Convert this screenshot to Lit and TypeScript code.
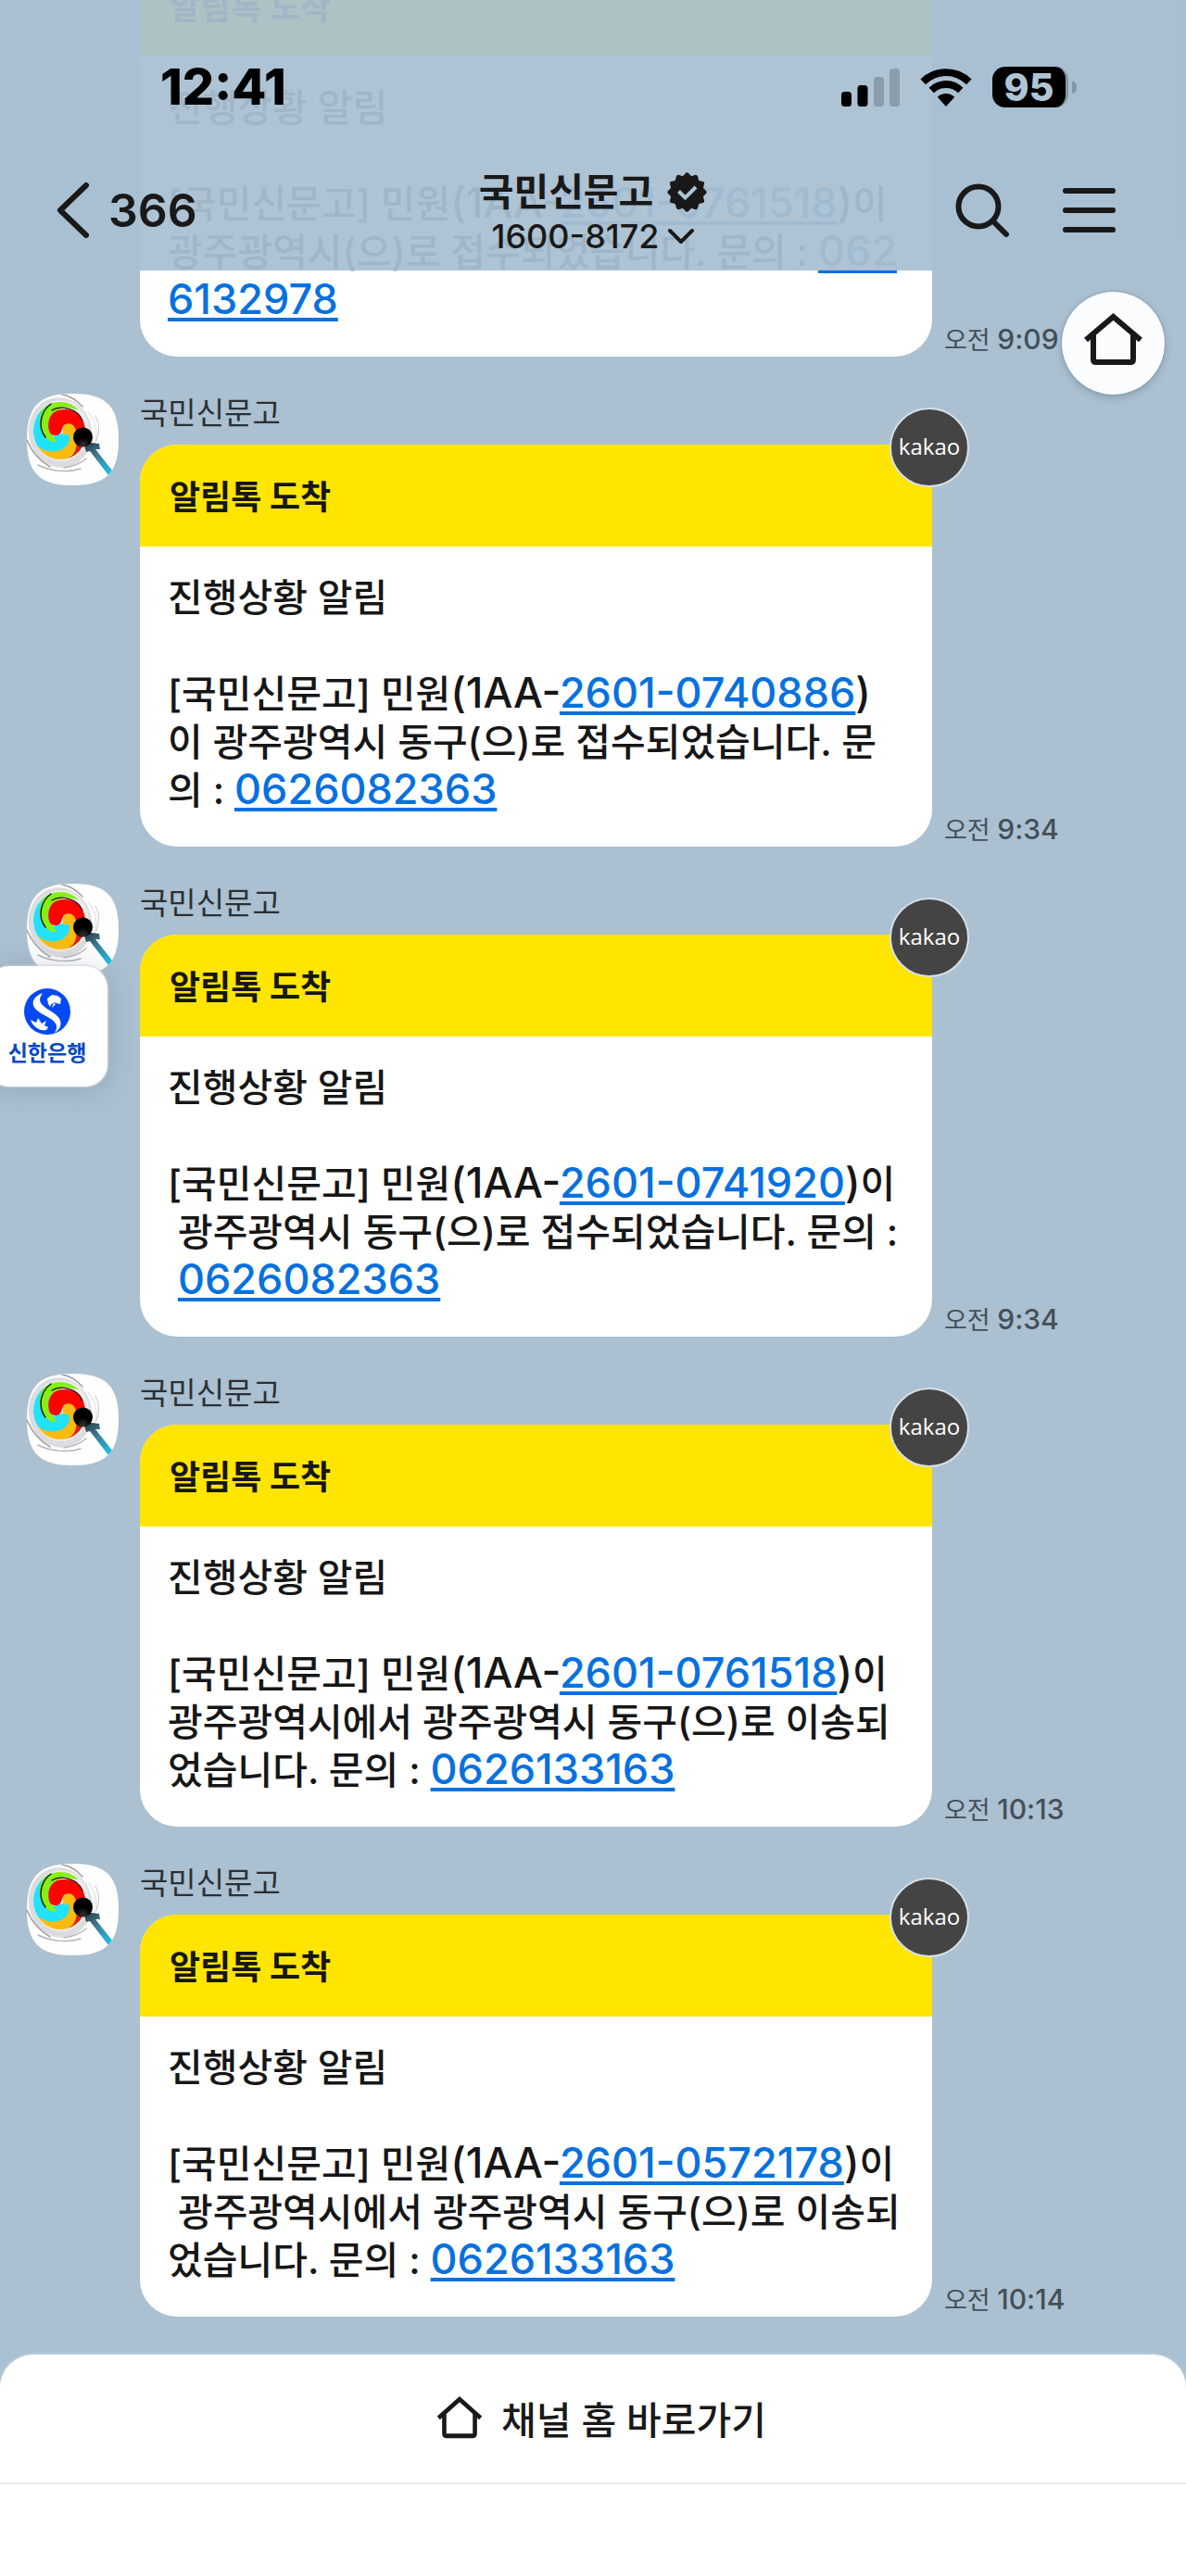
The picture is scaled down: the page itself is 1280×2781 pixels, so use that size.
import { LitElement, html, css, svg, nothing } from "lit";
import { customElement, property } from "lit/decorators.js";

type Part = { kind: "text" | "latin" | "link"; value: string };
interface Notice {
  parts: Part[];
  time: string;
  badge: boolean;
}

const t = (value: string): Part => ({ kind: "text", value });
const n = (value: string): Part => ({ kind: "latin", value });
const a = (value: string): Part => ({ kind: "link", value });

const NOTICES: Notice[] = [
  {
    parts: [t("[국민신문고] 민원"), n("(1AA-"), a("2601-0761518"), n(")"), t("이\n광주광역시(으)로 접수되었습니다. 문의 : "), a("062\n6132978")],
    time: "9:09",
    badge: false,
  },
  {
    parts: [t("[국민신문고] 민원"), n("(1AA-"), a("2601-0740886"), n(")"), t("\n이 광주광역시 동구(으)로 접수되었습니다. 문\n의 : "), a("0626082363")],
    time: "9:34",
    badge: true,
  },
  {
    parts: [t("[국민신문고] 민원"), n("(1AA-"), a("2601-0741920"), n(")"), t("이\n 광주광역시 동구(으)로 접수되었습니다. 문의 :\n "), a("0626082363")],
    time: "9:34",
    badge: true,
  },
  {
    parts: [t("[국민신문고] 민원"), n("(1AA-"), a("2601-0761518"), n(")"), t("이\n광주광역시에서 광주광역시 동구(으)로 이송되\n었습니다. 문의 : "), a("0626133163")],
    time: "10:13",
    badge: true,
  },
  {
    parts: [t("[국민신문고] 민원"), n("(1AA-"), a("2601-0572178"), n(")"), t("이\n 광주광역시에서 광주광역시 동구(으)로 이송되\n었습니다. 문의 : "), a("0626133163")],
    time: "10:14",
    badge: true,
  },
];

const houseShape = svg`
  <path d="M3 29 L32.500 4 L62 29" fill="none" stroke="#191919" stroke-width="6" />
  <path d="M11 23 V50 Q11 53 14 53 H51 Q54 53 54 50 V23" fill="none" stroke="#191919" stroke-width="6" />
`;

@customElement("sender-avatar")
export class SenderAvatar extends LitElement {
  static styles = css`
    :host { display: block; width: 99px; height: 99px; }
    svg { display: block; width: 100%; height: 100%; }
  `;
  render() {
    return html`
      <svg viewBox="0 0 99 99" aria-hidden="true">
        <defs>
          <clipPath id="tile"><path d="M49.500 0 C84 0 99 12 99 49.500 C99 87 84 99 49.500 99 C15 99 0 87 0 49.500 C0 12 15 0 49.500 0 Z" /></clipPath>
          <clipPath id="disc"><ellipse cx="36" cy="40" rx="29" ry="31" /></clipPath>
          <linearGradient id="stick" gradientUnits="userSpaceOnUse" x1="64" y1="54" x2="90" y2="86">
            <stop offset="0" stop-color="#29414b" /><stop offset=".45" stop-color="#3f8098" /><stop offset="1" stop-color="#18c0ea" />
          </linearGradient>
          <radialGradient id="ball" cx=".5" cy=".9" r=".8">
            <stop offset="0" stop-color="#333" /><stop offset=".5" stop-color="#000" />
          </radialGradient>
        </defs>
        <g clip-path="url(#tile)">
          <rect width="99" height="99" fill="#fefefe" />
          <ellipse cx="36" cy="42" rx="34" ry="38" fill="#dcdce0" transform="rotate(-12 36 42)" />
          <ellipse cx="37" cy="40" rx="30" ry="33" fill="#ececee" />
          <g clip-path="url(#disc)">
            <path d="M26 8 C12 14 6 26 7 42 L8 54 C14 62 22 64 30 63 C42 62 49 54 46 44 L38 43 L28 46 L20 30 Z" fill="#22e2fb" />
            <path d="M22 12 C32 5 50 7 58 18 L40 14 L26 24 L24 38 L32 52 C24 54 16 44 14 34 C13 24 16 16 22 12 Z" fill="#86ef16" />
            <path d="M24 40 C21 26 28 17 40 17 C54 17 62 27 63 38 L54 42 C51 34 45 31 40 34 C37 38 38 44 32 45 C27 45 25 43 24 40 Z" fill="#fb0400" />
            <path d="M39 36 C42 31 49 31 52 37 C54 44 55 50 60 56 C56 68 46 73 34 72 C22 70 12 62 9 54 C16 61 24 64 33 62 C42 60 47 53 46 46 C45 43 42 43 39 44 Z" fill="#fbbb10" />
            <path d="M44 70 C52 66 53 60 54 53 L66 53 C64 64 54 71 44 73 Z" fill="#dd1d10" />
          </g>
          <g fill="none" stroke-linecap="round">
            <path d="M26 11 C15 19 11 35 20 47" stroke="#0d2208" stroke-width="1.500" />
            <path d="M27 18 C36 12 55 16 60 29" stroke="#2b0a05" stroke-width="1.200" />
            <path d="M38 1 Q50 3 60 14" stroke="#9b9ba0" stroke-width="1.500" />
            <path d="M66 20 C76 31 77 46 72 58" stroke="#dadade" stroke-width="1" />
            <path d="M74 24 Q81 36 75 51" stroke="#c9c9cd" stroke-width="1" />
            <path d="M0 50 Q8 69 25 79" stroke="#a0a0a5" stroke-width="1.500" />
            <path d="M12 77 C24 83 42 86 58 81" stroke="#b4b4b8" stroke-width="1.500" />
            <path d="M40 80 Q55 78 64 70" stroke="#b5b5ba" stroke-width="1.500" />
          </g>
          <path d="M61 52 L70 53 L78 54 L79 60 L74 60 L93 84 L88 88 L68 62 L64 63 Z" fill="url(#stick)" />
          <circle cx="60.500" cy="47" r="10.500" fill="url(#ball)" />
        </g>
      </svg>
    `;
  }
}

@customElement("notice-message")
export class NoticeMessage extends LitElement {
  @property({ attribute: false }) notice!: Notice;

  static styles = css`
    :host {
      display: flex;
      align-items: flex-start;
      gap: 23px;
    }
    .column { flex: 0 1 855px; min-width: 0; }
    .name {
      margin: 0 0 13px;
      font-size: 33px;
      line-height: 42px;
      color: #2b3034;
    }
    .card {
      position: relative;
      border-radius: 40px;
      background: #fff;
      color: #161616;
    }
    .head {
      margin: 0;
      padding: 4px 32px 0;
      border-radius: 40px 40px 0 0;
      background: #ffe500;
      font-size: 36px;
      font-weight: 700;
      line-height: 106px;
    }
    .body {
      margin: 0;
      padding: 29px 30px 35px;
      font-size: 41px;
      font-weight: 500;
      line-height: 52px;
      white-space: pre;
    }
    .latin, .link { font-size: 45px; line-height: 44px; }
    .link {
      color: #0671df;
      text-decoration: underline;
      text-decoration-thickness: 4px;
      text-underline-offset: 4px;
      text-decoration-skip-ink: none;
    }
    .badge {
      position: absolute;
      top: -40px;
      right: -40px;
      box-sizing: border-box;
      width: 86px;
      height: 86px;
      border: 2px solid #d5e0e8;
      border-radius: 50%;
      background: #444;
      color: #fff;
      font: 24px/80px "Open Sans", "Noto Sans", sans-serif;
      text-align: center;
    }
    .time {
      align-self: flex-end;
      margin-left: -10px;
      font-size: 27px;
      line-height: 34px;
      color: #444f58;
      white-space: nowrap;
    }
    .clock { font-size: 30px; line-height: 30px; font-weight: 500; }
  `;

  private part(p: Part) {
    if (p.kind === "link") {
      return html`<a class="link" href="tel:${p.value.replace(/\s/g, "")}">${p.value}</a>`;
    }
    if (p.kind === "latin") return html`<span class="latin">${p.value}</span>`;
    return p.value;
  }

  render() {
    const { parts, time, badge } = this.notice;
    return html`
      <sender-avatar></sender-avatar>
      <div class="column">
        <p class="name">국민신문고</p>
        <div class="card">
          <h2 class="head">알림톡 도착</h2>
          <p class="body">${"진행상황 알림\n\n"}${parts.map((p) => this.part(p))}</p>
          ${badge ? html`<span class="badge">kakao</span>` : nothing}
        </div>
      </div>
      <time class="time">오전 <span class="clock">${time}</span></time>
    `;
  }
}

@customElement("app-root")
export class AppRoot extends LitElement {
  static styles = css`
    :host {
      position: relative;
      display: flex;
      flex-direction: column;
      min-height: 100vh;
      overflow: hidden;
      background: #abc0d1;
      color: #191919;
      font-family: Inter, "Noto Sans CJK KR", sans-serif;
    }
    svg { display: block; flex: none; }
    button {
      margin: 0;
      padding: 0;
      border: 0;
      background: none;
      color: inherit;
      font: inherit;
      cursor: pointer;
    }
    .top {
      position: absolute;
      inset: 0 0 auto;
      z-index: 2;
      padding-top: 47px;
      background: rgba(169, 191, 209, 0.94);
    }
    .status {
      display: flex;
      align-items: center;
      justify-content: space-between;
      height: 94px;
      padding: 0 118px 0 173px;
      color: #000;
    }
    .clock { font-size: 54px; font-weight: 800; line-height: 60px; }
    .radios { display: flex; align-items: center; gap: 22px; }
    .power { display: flex; align-items: center; gap: 4px; }
    .battery {
      width: 79px;
      height: 44px;
      border-right: 3px solid #8496a2;
      border-radius: 14px;
      background: #000;
      color: #afc5d5;
      font-size: 41px;
      font-weight: 800;
      line-height: 44px;
      text-align: center;
    }
    .nub { width: 5px; height: 13px; border-radius: 0 6px 6px 0; background: #8496a2; }
    .nav {
      display: grid;
      grid-template-columns: 1fr auto 1fr;
      align-items: center;
      height: 130px;
      padding: 21px 76px 0 61px;
    }
    .back {
      display: flex;
      align-items: center;
      justify-self: start;
      gap: 19px;
      font-size: 50px;
      font-weight: 600;
      line-height: 60px;
    }
    .heading { margin-right: -15px; }
    .title {
      display: flex;
      align-items: center;
      justify-content: center;
      gap: 15px;
      margin: 0;
      font-size: 41px;
      font-weight: 700;
      line-height: 56px;
    }
    .phone {
      display: flex;
      align-items: center;
      justify-content: center;
      gap: 8px;
      width: 100%;
      font-size: 36px;
      font-weight: 500;
      line-height: 40px;
    }
    .tools { display: flex; align-items: center; justify-self: end; gap: 56px; }
    .chat {
      display: flex;
      flex: 1;
      flex-direction: column;
      gap: 40px;
      margin-top: -104px;
      padding: 0 29px 41px;
    }
    .home {
      position: absolute;
      top: 315px;
      right: 23px;
      z-index: 3;
      display: grid;
      place-items: center;
      width: 111px;
      height: 111px;
      padding-bottom: 8px;
      border-radius: 50%;
      background: #fbfcfd;
      box-shadow: 0 3px 8px rgba(60, 85, 105, 0.3), 0 0 2px rgba(60, 85, 105, 0.5);
    }
    .bank {
      position: absolute;
      top: 1043px;
      left: -14px;
      z-index: 2;
      box-sizing: border-box;
      display: flex;
      flex-direction: column;
      align-items: center;
      gap: 3px;
      width: 130px;
      height: 130px;
      padding: 24px 0 0;
      border-radius: 24px;
      background: #fff;
      box-shadow: 0 0 2px 1px rgba(205, 212, 218, 0.9), 0 3px 30px rgba(60, 90, 115, 0.25);
      color: #0848c4;
      font-size: 23px;
      font-weight: 700;
      line-height: 34px;
    }
    .sheet {
      min-height: 239px;
      border-radius: 36px 36px 0 0;
      background: #fff;
      box-shadow: 0 0 3px rgba(255, 255, 255, 0.7);
    }
    .shortcut {
      display: flex;
      align-items: center;
      justify-content: center;
      gap: 20px;
      width: 100%;
      height: 140px;
      padding: 0 0 2px 18px;
      border-bottom: 2px solid #ececec;
      font-size: 41px;
      font-weight: 500;
    }
  `;

  private seal() {
    const points: string[] = [];
    for (let i = 0; i < 120; i++) {
      const angle = (i / 120) * Math.PI * 2 - Math.PI / 2;
      const r = 19.7 + 1.5 * Math.cos((i / 120) * Math.PI * 24);
      points.push(`${(21.5 + r * Math.cos(angle)).toFixed(2)},${(21.5 + r * Math.sin(angle)).toFixed(2)}`);
    }
    return points.join(" ");
  }

  render() {
    return html`
      <header class="top">
        <div class="status">
          <span class="clock">12:41</span>
          <div class="radios">
            <svg width="63" height="41" viewBox="0 0 63 41" aria-hidden="true">
              <rect x="0" y="25" width="11" height="16" rx="3.500" />
              <rect x="17.500" y="18" width="11" height="23" rx="3.500" />
              <rect x="35" y="9" width="11" height="32" rx="3.500" fill="#8b9daa" />
              <rect x="52" y="0" width="11" height="41" rx="3.500" fill="#8b9daa" />
            </svg>
            <svg width="56" height="42" viewBox="0 0 56 42" aria-hidden="true">
              <path d="M0.500 12.500 A39 39 0 0 1 55.500 12.500 L50 18.200 A31 31 0 0 0 6 18.200 Z" />
              <path d="M9.500 21.700 A26 26 0 0 1 46.500 21.700 L41 27.300 A18.300 18.300 0 0 0 15 27.300 Z" />
              <path d="M18.800 31.800 A13 13 0 0 1 37.200 31.800 L28 42 Z" />
            </svg>
            <div class="power"><div class="battery">95</div><div class="nub"></div></div>
          </div>
        </div>
        <nav class="nav">
          <button class="back" aria-label="뒤로">
            <svg width="37" height="62" viewBox="0 0 37 62" fill="none" stroke="#191919" stroke-width="6" stroke-linecap="round" stroke-linejoin="round" aria-hidden="true"><path d="M32 4 L4 31 L32 58" /></svg>
            <span>366</span>
          </button>
          <div class="heading">
            <h1 class="title">
              국민신문고
              <svg width="43" height="43" viewBox="0 0 43 43" aria-hidden="true">
                <polygon points=${this.seal()} fill="#191919" />
                <path d="M12.500 20.500 L19.500 27.500 L31 16" fill="none" stroke="#afc5d5" stroke-width="4" />
              </svg>
            </h1>
            <button class="phone">
              1600-8172
              <svg width="30" height="18" viewBox="0 0 30 18" fill="none" stroke="#191919" stroke-width="4" stroke-linecap="round" stroke-linejoin="round" aria-hidden="true"><path d="M3 3 L15 15 L27 3" /></svg>
            </button>
          </div>
          <div class="tools">
            <button aria-label="검색">
              <svg width="60" height="60" viewBox="0 0 60 60" fill="none" stroke="#191919" stroke-width="6" stroke-linecap="round" aria-hidden="true"><circle cx="25" cy="26" r="21.500" /><path d="M41 42 L55 56" /></svg>
            </button>
            <button aria-label="메뉴">
              <svg width="57" height="50" viewBox="0 0 57 50" stroke="#191919" stroke-width="6" stroke-linecap="round" aria-hidden="true"><path d="M3 4 H54 M3 25 H54 M3 46 H54" /></svg>
            </button>
          </div>
        </nav>
      </header>

      <main class="chat">
        ${NOTICES.map((notice) => html`<notice-message .notice=${notice}></notice-message>`)}
      </main>

      <button class="home" aria-label="채널 홈">
        <svg width="65" height="57" viewBox="0 0 65 57" aria-hidden="true">${houseShape}</svg>
      </button>

      <button class="bank">
        <svg width="50" height="50" viewBox="0 0 50 50" aria-hidden="true">
          <circle cx="25" cy="25" r="25" fill="#0549f5" />
          <path d="M20 5 C9 9 7 17 13 23 C19 29 31 32 34 38 C36 41 35 45 33 48 C40 44 42 36 36 30 C30 24 18 20 17 13 C17 9 19 7 20 5 Z" fill="#fff" />
          <path d="M25 11 L30 7 L36 8 L40 11 L39 17 L35 16 L32 15 L30 21 L34 17 Q30 14 28 20 Q25 16 25 11 Z" fill="#fff" />
          <path d="M7 34 L13 37 L15 32 L19 38 L24 35 L22 40 L26 42 L24 45 Q18 46 14 43 Q9 40 7 34 Z" fill="#fff" />
        </svg>
        <span>신한은행</span>
      </button>

      <footer class="sheet">
        <button class="shortcut">
          <svg width="50" height="46" viewBox="0 0 65 57" preserveAspectRatio="none" aria-hidden="true">${houseShape}</svg>
          <span>채널 홈 바로가기</span>
        </button>
      </footer>
    `;
  }
}
